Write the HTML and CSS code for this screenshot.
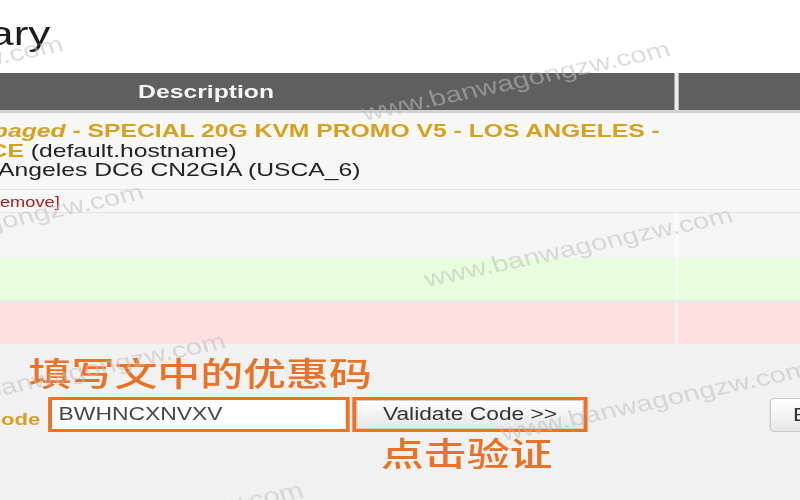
FILE: index.html
```html
<!DOCTYPE html>
<html lang="zh">
<head>
<meta charset="utf-8">
<title>Order Summary</title>
<link rel="stylesheet" href="styles.css">
</head>
<body>
<div class="page">
  <div class="top">
    <h1 class="title">Order Summary</h1>
  </div>
  <div class="tbl">
    <div class="row head">
      <div class="cell">Description</div>
      <div class="sep"></div>
      <div class="cell">Price</div>
    </div>
    <div class="row r1">
      <div class="cell desc">
        <div class="ln l1"><strong><em>paged</em> - SPECIAL 20G KVM PROMO V5 - LOS ANGELES -</strong></div>
        <div class="ln l2"><strong>CE</strong> (default.hostname)</div>
        <div class="ln l3">Angeles DC6 CN2GIA (USCA_6)</div>
      </div>
      <div class="sep"></div>
      <div class="cell"></div>
    </div>
    <div class="row r2">
      <div class="cell"><span class="remove">[Remove]</span></div>
      <div class="sep"></div>
      <div class="cell"></div>
    </div>
    <div class="row r3">
      <div class="cell"></div>
      <div class="sep"></div>
      <div class="cell"></div>
    </div>
    <div class="row r4">
      <div class="cell"></div>
      <div class="sep"></div>
      <div class="cell"></div>
    </div>
    <div class="row r5">
      <div class="cell"></div>
      <div class="sep"></div>
      <div class="cell"></div>
    </div>
  </div>
  <div class="bottom">
    <div class="hint hint1">填写文中的优惠码</div>
    <div class="form">
      <label class="label" for="code">Promo Code</label>
      <input id="code" class="code" type="text" value="BWHNCXNVXV">
      <button class="btn" type="button">Validate Code &gt;&gt;</button>
      <button class="btn2" type="button">Empty Cart</button>
    </div>
    <div class="hint hint2">点击验证</div>
  </div>

  <span class="wm wm-a">www.banwagongzw.com</span>
  <span class="wm wm-b">www.banwagongzw.com</span>
  <span class="wm wm-c">www.banwagongzw.com</span>
  <span class="wm wm-d">www.banwagongzw.com</span>
  <span class="wm wm-e">www.banwagongzw.com</span>
  <span class="wm wm-f">www.banwagongzw.com</span>
  <span class="wm wm-g">www.banwagongzw.com</span>
</div>
</body>
</html>
```
FILE: styles.css
```css
html, body {
  margin: 0;
  padding: 0;
}
body {
  width: 800px;
  height: 500px;
  overflow: hidden;
  background: #f1f1f1;
}
.page {
  position: relative;
  width: 616px;
  height: 500px;
  transform: scaleX(1.3);
  transform-origin: 0 0;
  font-family: "Liberation Sans", Arial, sans-serif;
  color: #222;
}

/* title */
.top {
  height: 73px;
  box-sizing: border-box;
  padding-top: 13px;
  background: #fff;
}
.title {
  margin: 0 0 0 -203px;
  font-size: 34px;
  line-height: 40px;
  font-weight: normal;
  color: #1c1c1c;
  white-space: nowrap;
}

/* table */
.tbl {
  margin-left: -202px;
  width: 1100px;
}
.row {
  display: grid;
  grid-template-columns: 721px 3px 1fr;
}
.head {
  height: 37px;
  border-bottom: 3px solid #d2d2d2;
}
.head .cell {
  background: #5f5f5f;
  color: #f5f5f5;
  font-weight: bold;
  font-size: 19px;
  line-height: 37px;
  text-align: center;
}
.head .sep {
  background: #ececec;
}
.r1 {
  background: #f7f7f7;
  border-bottom: 1px solid #e4e4e4;
}
.desc {
  padding: 8px 0 9.5px;
  font-size: 19px;
  line-height: 19.5px;
}
.ln {
  white-space: nowrap;
}
.ln strong {
  color: #d6a11f;
}
.l1 { margin-left: 196.5px; }
.l2 { margin-left: 194px; }
.l3 { margin-left: 200.5px; }
.r2 {
  height: 22px;
  background: #f7f7f7;
  border-bottom: 1px solid #e4e4e4;
}
.remove {
  display: block;
  margin-left: 188px;
  padding-top: 2px;
  font-size: 14px;
  line-height: 20px;
  color: #a32020;
}
.r3 {
  height: 45px;
  background: #f5f5f5;
}
.r3 .sep { background: #fbfbfb; }
.r4 {
  height: 42px;
  background: #e8fddb;
  border-bottom: 3px solid #e9e9e9;
}
.r4 .sep { background: #f4fff0; }
.r5 {
  height: 41px;
  background: #ffe0e0;
}
.r5 .sep { background: #fff1f1; }

/* bottom form */
.bottom {
  padding-top: 10px;
}
.hint {
  font-family: "Noto Sans CJK SC", "Noto Sans CJK JP", sans-serif;
  font-size: 33px;
  line-height: 36px;
  font-weight: 500;
  color: #ea7125;
  white-space: nowrap;
}
.hint1 {
  margin-left: 22px;
}
.form {
  display: flex;
  align-items: flex-start;
  height: 35px;
  margin-top: 7px;
}
.label {
  flex: none;
  margin-left: -70px;
  margin-right: 6px;
  padding-top: 5px;
  font-size: 17px;
  line-height: 35px;
  font-weight: bold;
  color: #d6a11f;
  white-space: nowrap;
}
.code {
  flex: none;
  box-sizing: border-box;
  width: 232px;
  height: 35px;
  margin: 0;
  padding: 0 5px;
  border: 3px solid #ec7322;
  background: #fff;
  font-family: "Liberation Sans", Arial, sans-serif;
  font-size: 17.6px;
  color: #474747;
  outline: none;
}
.btn {
  flex: none;
  box-sizing: border-box;
  width: 181px;
  height: 35px;
  margin: 0 0 0 2px;
  padding: 0;
  border: 3px solid #ec7322;
  box-shadow: inset 0 0 0 1px #d0d0d0;
  background: linear-gradient(#ffffff, #e6e6e6);
  font-family: "Liberation Sans", Arial, sans-serif;
  font-size: 17.5px;
  color: #333;
}
.btn2 {
  flex: none;
  box-sizing: border-box;
  width: 120px;
  height: 34px;
  margin: 1px 0 0 140px;
  padding: 0 0 0 17px;
  border: 1px solid #c8c8c8;
  border-radius: 4px;
  background: linear-gradient(#ffffff, #e8e8e8);
  font-family: "Liberation Sans", Arial, sans-serif;
  font-size: 17.5px;
  color: #333;
  text-align: left;
}
.hint2 {
  margin-top: 2px;
  margin-left: 293px;
}

/* watermark overlay */
.wm {
  position: absolute;
  font-family: "Liberation Sans", Arial, sans-serif;
  font-size: 22.5px;
  line-height: 24px;
  color: rgba(190, 190, 190, 0.55);
  white-space: nowrap;
  transform-origin: 0 20px;
  transform: rotate(-15.5deg);
  pointer-events: none;
}
.wm-a { left: 281px; top: 102px; }
.wm-b { left: -186px; top: 97px; }
.wm-c { left: -124px; top: 245px; }
.wm-d { left: 329px; top: 268px; }
.wm-e { left: -61px; top: 394px; }
.wm-f { left: 388px; top: 422px; }
.wm-g { left: -1px; top: 544px; }
```
